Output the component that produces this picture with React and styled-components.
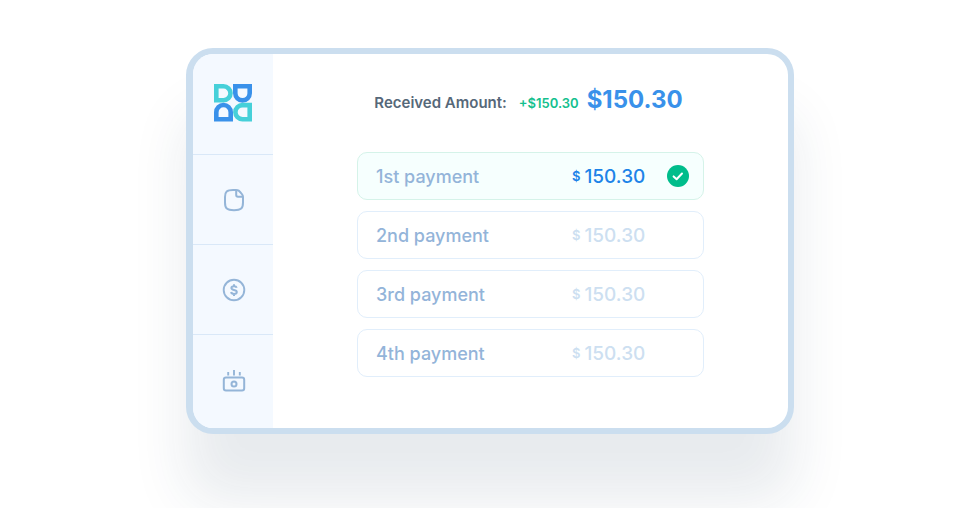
import React from "react";
import styled, { createGlobalStyle } from "styled-components";

const GlobalStyle = createGlobalStyle`
  * {
    box-sizing: border-box;
  }
  body {
    margin: 0;
    background: #fff;
    font-family: Inter, "Liberation Sans", sans-serif;
  }
`;

const Page = styled.div`
  min-height: 100vh;
  padding: 48px 8px 72px 18px;
`;
const Card = styled.div`
  display: flex;
  max-width: 608px;
  margin: 0 auto;
  border: 6px solid #cbdeef;
  border-left-width: 7px;
  border-radius: 27px;
  background: #fff;
  box-shadow: 0 66px 56px rgba(30, 60, 85, 0.1);
`;
const Sidebar = styled.nav`
  display: flex;
  flex-direction: column;
  flex: 0 0 80px;
  background: #f4f9ff;
  border-radius: 20px 0 0 20px;
`;
const LogoLink = styled.a`
  display: flex;
  align-items: center;
  justify-content: center;
  height: 100px;
  padding-bottom: 2px;
`;
const NavLink = styled.a`
  display: flex;
  align-items: center;
  justify-content: center;
  flex: 0 0 90px;
  padding-left: 2px;
  border-top: 1px solid #d9e8f8;
  color: #94b5d8;
  &:last-child {
    flex-grow: 1;
  }
`;
const Content = styled.main`
  flex: 1;
  min-width: 0;
  display: flex;
  flex-direction: column;
  align-items: center;
  gap: 33px;
  padding: 30px 20px 51px;
`;
const Summary = styled.div`
  display: flex;
  align-items: baseline;
  justify-content: center;
  padding-right: 4px;
  line-height: 32px;
`;
const SummaryLabel = styled.span`
  margin-right: 12px;
  font-size: 15px;
  font-weight: 600;
  color: #566879;
`;
const Added = styled.span`
  margin-right: 8px;
  font-size: 13px;
  font-weight: 600;
  color: #14c08e;
`;
const Total = styled.strong`
  font-size: 24px;
  font-weight: 700;
  color: #3991ea;
`;
const PaymentList = styled.ul`
  width: 100%;
  max-width: 347px;
  margin: 0;
  padding: 0;
  list-style: none;
  display: grid;
  gap: 11px;
`;
const PaymentRow = styled.li`
  display: grid;
  grid-template-columns: 1fr 95px 22px;
  align-items: center;
  height: 48px;
  padding: 0 14px 0 18px;
  border: 1px solid ${({ $paid }) => ($paid ? "#d5f3e9" : "#e1eefb")};
  border-radius: 10px;
  background: ${({ $paid }) => ($paid ? "#f6fffe" : "#fff")};
`;
const PaymentName = styled.span`
  font-size: 18px;
  font-weight: 500;
  color: #93b4d9;
`;
const Amount = styled.span`
  display: flex;
  align-items: center;
  gap: 4px;
  font-size: 19px;
  font-weight: 500;
  color: ${({ $paid }) => ($paid ? "#1d83e8" : "#cddff1")};
`;
const Currency = styled.span`
  font-size: 13px;
  font-weight: 600;
`;

const Logo = () => (
  <svg width="38" height="38" viewBox="0 0 38 38" fillRule="evenodd" aria-hidden="true">
    <path fill="#46d0d9" d="M0 0h9.5a9.3 9.3 0 0 1 0 18.6H0zM4.6 4.6v9.4h4.9a4.7 4.7 0 0 0 0-9.4z" />
    <path fill="#3991ea" d="M19 0h19v9.2a9.5 9.5 0 0 1-19 0zM23.6 4.6v4.6a4.9 4.9 0 0 0 9.8 0V4.6z" />
    <path fill="#3991ea" d="M0 37.6V28.2a9.5 9.5 0 0 1 19 0v9.4zM4.6 33h9.8v-4.8a4.9 4.9 0 0 0-9.8 0z" />
    <path fill="#46d0d9" d="M38 37.6h-9.5a9.4 9.4 0 0 1 0-18.8H38zM33.4 33v-9.6h-4.9a4.8 4.8 0 0 0 0 9.6z" />
  </svg>
);

const FileIcon = () => (
  <svg width="24" height="24" viewBox="0 0 24 24" fill="none" stroke="currentColor" strokeWidth="2" strokeLinejoin="round" aria-hidden="true">
    <path d="M14 1.900H11C4.800 1.900 3 3.600 3 9v5.500C3 20.500 4.800 22.200 12 22.200s9-1.700 9-7.700V9c0-1-.2-1.700-.8-2.500C18.900 4.700 18 3.600 16.700 2.600 16 2.100 15.200 1.900 14 1.900z" />
    <path d="M14.200 2.300V7c0 1.200.6 1.800 1.800 1.800h4.800" />
  </svg>
);

const CoinIcon = () => (
  <svg width="24" height="24" viewBox="0 0 24 24" fill="none" stroke="currentColor" aria-hidden="true">
    <circle cx="12" cy="12" r="10.3" strokeWidth="1.900" />
    <path strokeWidth="2" d="M14.700 9.800c-.3-1-1.300-1.600-2.700-1.600-1.600 0-2.600.7-2.600 1.800 0 1.200 1 1.600 2.600 1.900s2.800.8 2.800 2.100c0 1.100-1.100 1.900-2.800 1.900-1.600 0-2.700-.7-2.900-1.900M12 6.200v2M12 16v2" />
  </svg>
);

const CashIcon = () => (
  <svg width="24" height="24" viewBox="0 0 24 24" fill="none" stroke="currentColor" strokeWidth="2" aria-hidden="true">
    <rect x="1.800" y="7.500" width="20.400" height="12.900" rx="2.200" />
    <circle cx="12" cy="14" r="2.500" />
    <path d="M6.200 2v3.500M12 0v5.500M17.800 2v3.500" strokeWidth="1.900" />
  </svg>
);

const PaidIcon = () => (
  <svg width="22" height="22" viewBox="0 0 22 22" role="img" aria-label="Paid">
    <circle cx="11" cy="11" r="11" fill="#00bd8b" />
    <path d="M6.600 11.400l3 2.800 5.400-5.700" fill="none" stroke="#fff" strokeWidth="2" strokeLinecap="round" strokeLinejoin="round" />
  </svg>
);

const payments = [
  { name: "1st payment", amount: "150.30", paid: true },
  { name: "2nd payment", amount: "150.30", paid: false },
  { name: "3rd payment", amount: "150.30", paid: false },
  { name: "4th payment", amount: "150.30", paid: false },
];

const App = () => {
  return (
    <>
      <GlobalStyle />
      <Page>
        <Card>
          <Sidebar>
            <LogoLink href="#" aria-label="Home">
              <Logo />
            </LogoLink>
            <NavLink href="#documents" aria-label="Documents">
              <FileIcon />
            </NavLink>
            <NavLink href="#payments" aria-label="Payments">
              <CoinIcon />
            </NavLink>
            <NavLink href="#cash" aria-label="Cash">
              <CashIcon />
            </NavLink>
          </Sidebar>
          <Content>
            <Summary>
              <SummaryLabel>Received Amount:</SummaryLabel>
              <Added>+$150.30</Added>
              <Total>$150.30</Total>
            </Summary>
            <PaymentList>
              {payments.map(({ name, amount, paid }) => (
                <PaymentRow key={name} $paid={paid}>
                  <PaymentName>{name}</PaymentName>
                  <Amount $paid={paid}>
                    <Currency>$</Currency>
                    {amount}
                  </Amount>
                  {paid && <PaidIcon />}
                </PaymentRow>
              ))}
            </PaymentList>
          </Content>
        </Card>
      </Page>
    </>
  );
};

export default App;
